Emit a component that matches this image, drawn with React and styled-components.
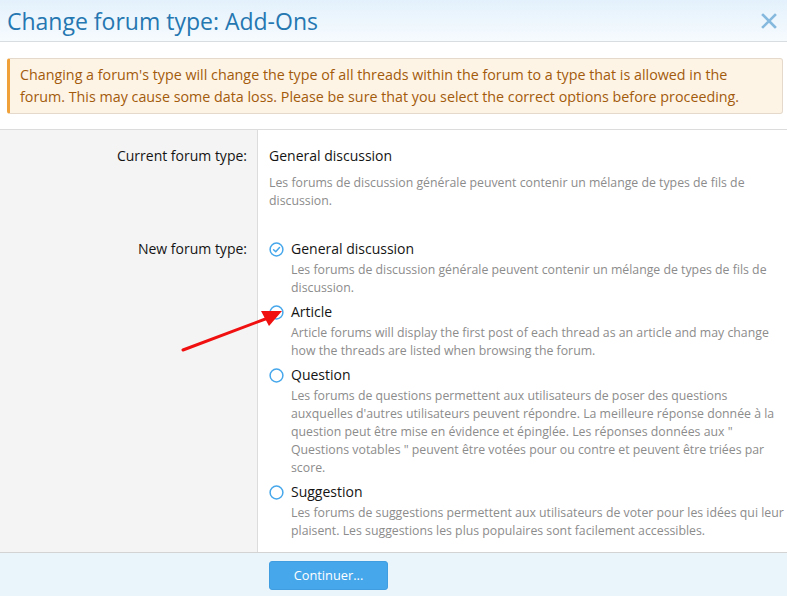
import React from "react";
import styled, { createGlobalStyle } from "styled-components";

const GlobalStyle = createGlobalStyle`
  html, body {
    margin: 0;
    padding: 0;
    background: #fff;
  }
  body {
    font-family: "Open Sans", "Noto Sans", sans-serif;
    color: #141414;
  }
`;

const types = [
  {
    id: "discussion",
    title: "General discussion",
    desc: "Les forums de discussion générale peuvent contenir un mélange de types de fils de discussion.",
    checked: true,
  },
  {
    id: "article",
    title: "Article",
    desc: "Article forums will display the first post of each thread as an article and may change how the threads are listed when browsing the forum.",
  },
  {
    id: "question",
    title: "Question",
    desc: "Les forums de questions permettent aux utilisateurs de poser des questions auxquelles d'autres utilisateurs peuvent répondre. La meilleure réponse donnée à la question peut être mise en évidence et épinglée. Les réponses données aux \" Questions votables \" peuvent être votées pour ou contre et peuvent être triées par score.",
  },
  {
    id: "suggestion",
    title: "Suggestion",
    desc: "Les forums de suggestions permettent aux utilisateurs de voter pour les idées qui leur plaisent. Les suggestions les plus populaires sont facilement accessibles.",
  },
];

const RadioIcon = ({ checked }) => (
  <svg width="15" height="15" viewBox="0 0 15 15">
    <circle cx="7.5" cy="7.5" r="6.4" fill="none" stroke="#47a7eb" strokeWidth="1.5" />
    {checked && (
      <path d="M4.6 7.7 L6.7 9.7 L10.5 5.6" fill="none" stroke="#47a7eb" strokeWidth="1.5" strokeLinecap="round" strokeLinejoin="round" />
    )}
  </svg>
);

const App = () => (
  <>
    <GlobalStyle />
    <Overlay>
      <Header>
        <Title>Change forum type: Add-Ons</Title>
        <Close aria-label="Close">
          <svg width="16" height="16" viewBox="0 0 16 16">
            <path d="M2 2 L14 14 M14 2 L2 14" stroke="#86b9de" strokeWidth="2.6" strokeLinecap="square" />
          </svg>
        </Close>
      </Header>

      <Body>
        <Notice>
          Changing a forum's type will change the type of all threads within the forum to a type that is allowed in the
          forum. This may cause some data loss. Please be sure that you select the correct options before proceeding.
        </Notice>
      </Body>

      <Form>
        <Row>
          <Label>Current forum type:</Label>
          <Field>
            <Value>General discussion</Value>
            <Explain>
              Les forums de discussion générale peuvent contenir un mélange de types de fils de discussion.
            </Explain>
          </Field>
        </Row>
        <Row $last>
          <Label>New forum type:</Label>
          <Field>
            {types.map((t) => (
              <Option key={t.id}>
                <OptionHead>
                  <RadioIcon checked={t.checked} />
                  <OptionTitle>{t.title}</OptionTitle>
                </OptionHead>
                <OptionDesc>{t.desc}</OptionDesc>
              </Option>
            ))}
          </Field>
        </Row>
      </Form>

      <Footer>
        <FooterSpacer />
        <Button>Continuer...</Button>
      </Footer>

      <Arrow width="120" height="60" viewBox="0 0 120 60">
        <line x1="3" y1="49" x2="88" y2="17" stroke="#f01010" strokeWidth="3" strokeLinecap="round" />
        <polygon points="102,10 81,10 89,25" fill="#f01010" />
      </Arrow>
    </Overlay>
  </>
);

export default App;

const Overlay = styled.div`
  position: relative;
  width: 787px;
  height: 596px;
  overflow: hidden;
  display: flex;
  flex-direction: column;
`;

const Header = styled.header`
  height: 41px;
  display: flex;
  align-items: center;
  justify-content: space-between;
  padding: 0 10px 0 7px;
  background: linear-gradient(to bottom, #e3f1fc, #f7fbfe);
  border-bottom: 1px solid #d8dde2;
  box-sizing: content-box;
`;

const Title = styled.h1`
  margin: 0;
  font-size: 23px;
  font-weight: 400;
  color: #2577b1;
`;

const Close = styled.span`
  display: flex;
  align-items: center;
  padding-top: 1px;
`;

const Body = styled.div`
  padding: 16px 4px 15px 7px;
`;

const Notice = styled.div`
  background: #fef4e6;
  border: 1px solid #e4d9cb;
  border-left: 3px solid #f0a13a;
  border-radius: 3px;
  color: #a25b0c;
  font-size: 14.3px;
  line-height: 22px;
  padding: 5px 10px 5px 10px;
`;

const Form = styled.div`
  flex: 1;
  border-top: 1px solid #dcdcdc;
`;

const Row = styled.div`
  display: grid;
  grid-template-columns: 258px 1fr;
  height: ${(p) => (p.$last ? "auto" : "93px")};
`;

const Label = styled.div`
  background: #f4f4f4;
  border-right: 1px solid #dcdcdc;
  text-align: right;
  padding: 16px 10px 0 0;
  font-size: 14px;
  line-height: 20px;
  color: #141414;
`;

const Field = styled.div`
  padding: 16px 2px 7px 11px;
`;

const Value = styled.div`
  font-size: 14px;
  line-height: 20px;
`;

const Explain = styled.div`
  margin-top: 8px;
  font-size: 12.3px;
  line-height: 17.5px;
  color: #8c8c8c;
`;

const Option = styled.div`
  margin-bottom: 5px;
`;

const OptionHead = styled.div`
  display: flex;
  align-items: center;
  gap: 7px;
  height: 20px;
  margin-bottom: 2px;

  svg {
    flex-shrink: 0;
  }
`;

const OptionTitle = styled.span`
  font-size: 14px;
  line-height: 20px;
`;

const OptionDesc = styled.div`
  padding-left: 22px;
  font-size: 12.3px;
  line-height: 18px;
  color: #8c8c8c;
`;

const Footer = styled.footer`
  display: grid;
  grid-template-columns: 269px auto;
  align-items: center;
  height: 43px;
  background: #eaf4fb;
  border-top: 1px solid #d3d3d3;
`;

const FooterSpacer = styled.div``;

const Button = styled.button`
  width: 119px;
  height: 29px;
  border: 1px solid #3f9de0;
  border-radius: 3px;
  background: #47a7eb;
  color: #fff;
  font-family: "Open Sans", "Noto Sans", sans-serif;
  font-size: 12.8px;
  padding: 0;
  margin-top: 1px;
`;

const Arrow = styled.svg`
  position: absolute;
  left: 180px;
  top: 301px;
  pointer-events: none;
`;
